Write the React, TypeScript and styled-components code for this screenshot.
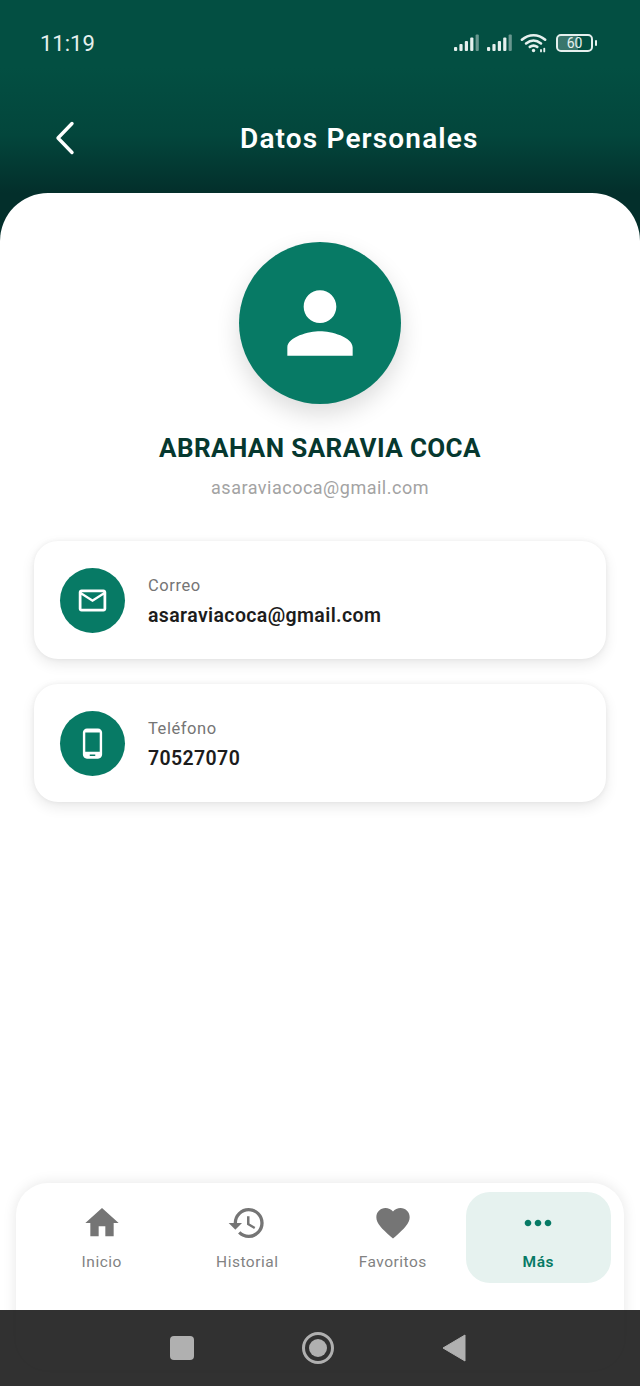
import React from 'react';
import styled, { createGlobalStyle } from 'styled-components';
import {
  MdFavorite,
  MdHistory,
  MdHome,
  MdMoreHoriz,
  MdOutlineEmail,
  MdPerson,
  MdPhoneAndroid,
} from 'react-icons/md';

const GlobalStyle = createGlobalStyle`
  html, body {
    margin: 0;
    padding: 0;
    background: #fff;
  }
  * {
    box-sizing: border-box;
  }
`;

const Page = styled.div`
  background: #032f2b;
  display: flex;
  flex-direction: column;
  font-family: Roboto, 'Liberation Sans', sans-serif;
  height: 1386px;
  overflow: hidden;
  position: relative;
  width: 640px;
`;

const Header = styled.header`
  background: linear-gradient(180deg, #034f42 0%, #034f42 35%, #03463c 70%, #032f2b 100%);
  display: flex;
  flex-direction: column;
  height: 193px;
  padding: 0 43px 0 40px;
`;

const StatusBar = styled.div`
  align-items: center;
  color: #e6f0ee;
  display: flex;
  font-size: 22px;
  height: 34px;
  justify-content: space-between;
  letter-spacing: 0;
  margin-top: 26px;
`;

const StatusIcons = styled.div`
  align-items: center;
  display: flex;
  gap: 7px;
`;

const Battery = styled.div`
  align-items: center;
  background: linear-gradient(90deg, rgba(255, 255, 255, 0.22) 60%, transparent 60%);
  background-clip: padding-box;
  border: 2px solid #e6f0ee;
  border-radius: 5px;
  color: #e6f0ee;
  display: flex;
  font-size: 14px;
  height: 18px;
  justify-content: center;
  letter-spacing: 0;
  margin-left: 1px;
  margin-right: 4px;
  position: relative;
  width: 37px;

  &::after {
    background: #e6f0ee;
    border-radius: 1px;
    content: '';
    height: 6px;
    position: absolute;
    right: -6px;
    top: 4px;
    width: 2px;
  }
`;

const TitleRow = styled.div`
  align-items: center;
  display: flex;
  height: 60px;
  margin-top: 48px;
`;

const BackIcon = styled.svg`
  display: block;
  margin-left: 14px;
`;

const Title = styled.h1`
  color: #fff;
  font-size: 28px;
  font-weight: 600;
  letter-spacing: 1.15px;
  margin: 0 0 0 164px;
  white-space: nowrap;
`;

const Sheet = styled.main`
  align-items: center;
  background: #fff;
  border-radius: 48px 48px 0 0;
  display: flex;
  flex: 1;
  flex-direction: column;
  padding-top: 49px;
`;

const Avatar = styled.div`
  align-items: center;
  background: #077a65;
  border-radius: 50%;
  box-shadow: 0 10px 24px rgba(0, 0, 0, 0.14);
  color: #fff;
  display: flex;
  height: 162px;
  justify-content: center;
  width: 162px;
`;

const Name = styled.h2`
  color: #06382f;
  font-size: 26px;
  font-weight: 700;
  letter-spacing: 0.4px;
  line-height: 32px;
  margin: 28px 0 0;
`;

const Email = styled.p`
  color: #a3a3a3;
  font-size: 18px;
  letter-spacing: 0.5px;
  line-height: 24px;
  margin: 12px 0 0;
`;

const CardList = styled.section`
  align-self: stretch;
  display: flex;
  flex-direction: column;
  gap: 25px;
  margin-top: 41px;
  padding: 0 34px;
`;

const Card = styled.div`
  align-items: center;
  background: #fff;
  border-radius: 24px;
  box-shadow: 0 5px 14px rgba(0, 0, 0, 0.09), 0 0 5px rgba(0, 0, 0, 0.06);
  display: flex;
  gap: 23px;
  height: 118px;
  padding: 0 26px;
`;

const CardIcon = styled.div`
  align-items: center;
  background: #077a65;
  border-radius: 50%;
  color: #fff;
  display: flex;
  flex-shrink: 0;
  height: 65px;
  justify-content: center;
  width: 65px;
`;

const CardText = styled.div`
  display: flex;
  flex-direction: column;
  gap: 7px;
  padding-top: 2px;
`;

const CardLabel = styled.span`
  color: #757575;
  font-size: 16.5px;
  font-weight: 400;
  letter-spacing: 0.55px;
  line-height: 22px;
`;

const CardValue = styled.span`
  color: #1c1c1c;
  font-size: 19.5px;
  font-weight: 600;
  letter-spacing: 0.38px;
  line-height: 24px;
`;

const NavCard = styled.nav`
  background: #fff;
  border-radius: 32px;
  bottom: 16px;
  box-shadow: 0 0 14px rgba(0, 0, 0, 0.1);
  display: grid;
  grid-template-columns: repeat(4, 1fr);
  height: 187px;
  left: 16px;
  padding: 9px 13px 0;
  position: absolute;
  width: 608px;
`;

const NavItem = styled.div<{ $active?: boolean }>`
  align-items: center;
  background: ${({ $active }) => ($active ? '#e6f2ef' : 'transparent')};
  border-radius: 24px;
  color: ${({ $active }) => ($active ? '#077a65' : '#757575')};
  display: flex;
  flex-direction: column;
  height: 91px;
  padding-top: 11px;
`;

const NavLabel = styled.span<{ $active?: boolean }>`
  color: ${({ $active }) => ($active ? '#077a65' : '#828282')};
  font-size: 15.5px;
  font-weight: ${({ $active }) => ($active ? 600 : 400)};
  letter-spacing: 0.5px;
  line-height: 20px;
  margin-top: 9px;
`;

const SystemBar = styled.div`
  align-items: center;
  background: rgba(27, 27, 27, 0.9);
  bottom: 0;
  display: flex;
  gap: 108px;
  height: 76px;
  justify-content: center;
  left: 0;
  padding-right: 4px;
  position: absolute;
  right: 0;
`;

const SquareKey = styled.div`
  background: #b0b0b0;
  border-radius: 4px;
  height: 24px;
  width: 24px;
`;

const HomeKey = styled.div`
  align-items: center;
  border: 3px solid #b0b0b0;
  border-radius: 50%;
  display: flex;
  height: 32px;
  justify-content: center;
  width: 32px;

  &::after {
    background: #b0b0b0;
    border-radius: 50%;
    content: '';
    height: 18px;
    width: 18px;
  }
`;

const Signal = () => (
  <svg width="26" height="18" viewBox="0 0 26 18" fill="#e6f0ee">
    <rect x="0" y="13" width="3.2" height="4" rx="1" />
    <rect x="5.4" y="10" width="3.2" height="7" rx="1" />
    <rect x="10.8" y="7" width="3.2" height="10" rx="1" />
    <rect x="16.2" y="3.5" width="3.2" height="13.5" rx="1" />
    <rect x="21.6" y="0.5" width="3.2" height="16.5" rx="1" opacity="0.45" />
  </svg>
);

const Wifi = () => (
  <svg width="28" height="22" viewBox="0 0 30 22" fill="none" stroke="#e6f0ee" strokeWidth="2.8" strokeLinecap="round">
    <path d="M2 7.5C9.5 1 19.5 1 27 7.5" />
    <path d="M6.5 11.5C11.5 7.5 17.5 7.5 22.5 11.5" />
    <path d="M10.5 15.2C13 13.4 16 13.4 18.5 15.2" />
    <circle cx="14.5" cy="19" r="1.8" fill="#e6f0ee" stroke="none" />
    <path d="M22.5 20V18.5M26 20V17" strokeWidth="2" />
  </svg>
);

const BackArrow = () => (
  <BackIcon width="22" height="34" viewBox="0 0 22 34" fill="none" stroke="#fff" strokeWidth="3.4" strokeLinecap="round" strokeLinejoin="round">
    <path d="M18 2.5L4 17L18 31.5" />
  </BackIcon>
);

const navItems = [
  { label: 'Inicio', Icon: MdHome },
  { label: 'Historial', Icon: MdHistory },
  { label: 'Favoritos', Icon: MdFavorite },
  { label: 'Más', Icon: MdMoreHoriz, active: true },
];

const App = () => (
  <Page>
    <GlobalStyle />
    <Header>
      <StatusBar>
        <span>11:19</span>
        <StatusIcons>
          <Signal />
          <Signal />
          <Wifi />
          <Battery>60</Battery>
        </StatusIcons>
      </StatusBar>
      <TitleRow>
        <BackArrow />
        <Title>Datos Personales</Title>
      </TitleRow>
    </Header>
    <Sheet>
      <Avatar>
        <MdPerson size={98} />
      </Avatar>
      <Name>ABRAHAN SARAVIA COCA</Name>
      <Email>asaraviacoca@gmail.com</Email>
      <CardList>
        <Card>
          <CardIcon>
            <MdOutlineEmail size={33} />
          </CardIcon>
          <CardText>
            <CardLabel>Correo</CardLabel>
            <CardValue>asaraviacoca@gmail.com</CardValue>
          </CardText>
        </Card>
        <Card>
          <CardIcon>
            <MdPhoneAndroid size={33} />
          </CardIcon>
          <CardText>
            <CardLabel>Teléfono</CardLabel>
            <CardValue>70527070</CardValue>
          </CardText>
        </Card>
      </CardList>
    </Sheet>
    <NavCard>
      {navItems.map(({ label, Icon, active }) => (
        <NavItem $active={active} key={label}>
          <Icon size={40} />
          <NavLabel $active={active}>{label}</NavLabel>
        </NavItem>
      ))}
    </NavCard>
    <SystemBar>
      <SquareKey />
      <HomeKey />
      <svg width="24" height="28" viewBox="0 0 24 28" fill="#b0b0b0">
        <path d="M23 1V27L1 14Z" strokeLinejoin="round" stroke="#b0b0b0" strokeWidth="1" />
      </svg>
    </SystemBar>
  </Page>
);

export default App;
